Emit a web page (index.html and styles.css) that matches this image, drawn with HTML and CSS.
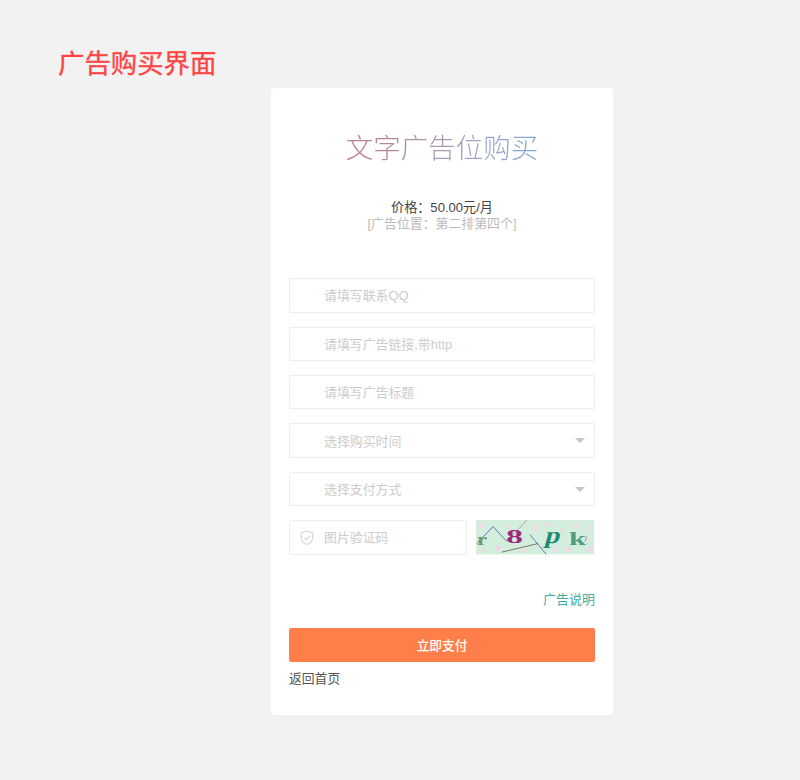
FILE: index.html
```html
<!DOCTYPE html>
<html lang="zh-CN">
<head>
    <meta charset="UTF-8">
    <meta name="viewport" content="width=device-width, initial-scale=1.0">
    <title>广告购买界面</title>
    <link rel="stylesheet" href="styles.css">
</head>
<body>
    <h1 class="page-title">广告购买界面</h1>
    <div class="card">
        <h2 class="card-title">文字广告位购买</h2>
        <div class="price">价格：50.00元/月</div>
        <div class="position">[广告位置：第二排第四个]</div>
        <form class="buy-form">
            <div class="field"><input type="text" placeholder="请填写联系QQ"></div>
            <div class="field"><input type="text" placeholder="请填写广告链接,带http"></div>
            <div class="field"><input type="text" placeholder="请填写广告标题"></div>
            <div class="field field-select">
                <select><option>选择购买时间</option></select>
                <span class="arrow"></span>
            </div>
            <div class="field field-select">
                <select><option>选择支付方式</option></select>
                <span class="arrow"></span>
            </div>
            <div class="captcha-row">
                <div class="field captcha-input">
                    <svg class="shield" viewBox="0 0 16 18" width="14" height="15.5">
                        <path d="M8 1.2 L14.6 3.4 V9 C14.6 13 11.6 15.6 8 16.8 C4.4 15.6 1.4 13 1.4 9 V3.4 Z" fill="none" stroke="#d8d8d8" stroke-width="1.4" stroke-linejoin="round"/>
                        <path d="M4.8 8.8 L7.4 11.2 L11.4 6.8" fill="none" stroke="#d8d8d8" stroke-width="1.4"/>
                    </svg>
                    <input type="text" placeholder="图片验证码">
                </div>
                <svg class="captcha-img" viewBox="0 0 118 35" preserveAspectRatio="none">
                    <rect width="118" height="35" fill="#d4eedd"/>
                    <g fill="#f0d8e8">
                        <circle cx="6" cy="6" r="2.5"/><circle cx="14" cy="12" r="2"/><circle cx="22" cy="29" r="3"/>
                        <circle cx="48" cy="31" r="2.5"/><circle cx="60" cy="8" r="3"/><circle cx="72" cy="5" r="2.5"/>
                        <circle cx="92" cy="30" r="3"/><circle cx="100" cy="6" r="2.5"/><circle cx="114" cy="30" r="3"/>
                        <circle cx="34" cy="8" r="2"/><circle cx="86" cy="10" r="2"/><circle cx="112" cy="8" r="2"/>
                        <circle cx="80" cy="31" r="2"/><circle cx="8" cy="31" r="2"/>
                    </g>
                    <g fill="none" stroke-width="0.8">
                        <path d="M0.7 24 L17 6.7 L30.7 21.7" stroke="#4a5aa8"/>
                        <path d="M37 15 L51 0" stroke="#b486b0"/>
                        <path d="M25.7 32.7 L62 24" stroke="#6a5a4a"/>
                        <path d="M54 15 L70 34.7" stroke="#4a5aa8"/>
                        <path d="M110.7 16.7 L109 22" stroke="#c06a8a"/>
                    </g>
                    <text class="cap-r" x="1" y="25" textLength="10" lengthAdjust="spacingAndGlyphs">r</text>
                    <text class="cap-8" x="30" y="23" textLength="17" lengthAdjust="spacingAndGlyphs">8</text>
                    <text class="cap-p" transform="translate(68 23) skewX(-15)" textLength="15" lengthAdjust="spacingAndGlyphs">p</text>
                    <text class="cap-k" x="93" y="25" textLength="17" lengthAdjust="spacingAndGlyphs">k</text>
                </svg>
            </div>
            <div class="help-row"><a class="help-link" href="#">广告说明</a></div>
            <button class="pay-btn" type="button">立即支付</button>
            <a class="back-link" href="#">返回首页</a>
        </form>
    </div>
</body>
</html>
```

FILE: styles.css
```css
* {
    box-sizing: border-box;
}
body {
    margin: 0;
    height: 780px;
    overflow: hidden;
    background-color: #f2f2f2;
    font-family: "Liberation Sans", "Noto Sans CJK SC", sans-serif;
}
.page-title {
    margin: 0;
    padding: 45px 0 0 58px;
    height: 88px;
    font-size: 26.4px;
    line-height: 38px;
    font-weight: 400;
    -webkit-text-stroke: 0.35px #ff4444;
    color: #ff4444;
}
.card {
    width: 342px;
    height: 627px;
    margin-left: 271px;
    padding: 42px 18px 0;
    background: #fff;
    border-radius: 4px;
}
.card-title {
    margin: 0;
    font-size: 27.5px;
    line-height: 38px;
    font-weight: 300;
    text-align: center;
    background: linear-gradient(90deg, #c96f6f, #b08a98 35%, #9fa3c6 60%, #62a8dc);
    -webkit-background-clip: text;
    background-clip: text;
    color: transparent;
}
.price {
    margin-top: 31.5px;
    font-size: 13.1px;
    line-height: 16px;
    text-align: center;
    color: #444;
}
.position {
    font-size: 12.9px;
    line-height: 16.5px;
    text-align: center;
    color: #bbb;
}
.buy-form {
    margin-top: 46.3px;
    display: flex;
    flex-direction: column;
    gap: 14px;
}
.field {
    position: relative;
    display: flex;
    align-items: center;
    height: 34.4px;
    border: 1px solid #eeeeee;
    border-radius: 2px;
    background: #fff;
}
.field input, .field select {
    width: 100%;
    height: 100%;
    border: 0;
    outline: 0;
    padding: 1px 34px 0;
    background: transparent;
    font-family: inherit;
    font-size: 12.9px;
    color: #ccc;
    appearance: none;
    -webkit-appearance: none;
}
.field input::placeholder {
    color: #ccc;
    opacity: 1;
}
.arrow {
    position: absolute;
    right: 9px;
    top: 14px;
    width: 0;
    height: 0;
    border-left: 5.3px solid transparent;
    border-right: 5.3px solid transparent;
    border-top: 5.8px solid #c6c6c6;
}
.captcha-row {
    display: flex;
    align-items: center;
    padding-right: 1px;
    justify-content: space-between;
}
.captcha-input {
    width: 178px;
}
.shield {
    position: absolute;
    left: 10px;
    top: 9px;
}
.captcha-img {
    display: block;
    width: 118px;
    height: 34.4px;
}
.captcha-img text {
    font-family: "Liberation Serif", serif;
    font-weight: 700;
}
.cap-r { font-size: 16px; fill: #6f9a63; }
.cap-8 { font-size: 20px; fill: #9c2a7c; }
.cap-p { font-size: 24px; fill: #1f8a74; }
.cap-k { font-size: 20px; fill: #4f9d80; }
.help-row {
    margin-top: 21.4px;
    text-align: right;
    line-height: 18px;
}
.help-link {
    font-size: 13px;
    color: #3fae9f;
    text-decoration: none;
}
.pay-btn {
    height: 34.6px;
    margin-top: 4.6px;
    border: 0;
    border-radius: 2px;
    background: #ff7f4a;
    color: #fff;
    font-family: inherit;
    font-size: 12.7px;
    font-weight: 500;
}
.back-link {
    margin-top: -6.5px;
    font-size: 12.8px;
    line-height: 18px;
    color: #555;
    text-decoration: none;
}
```
